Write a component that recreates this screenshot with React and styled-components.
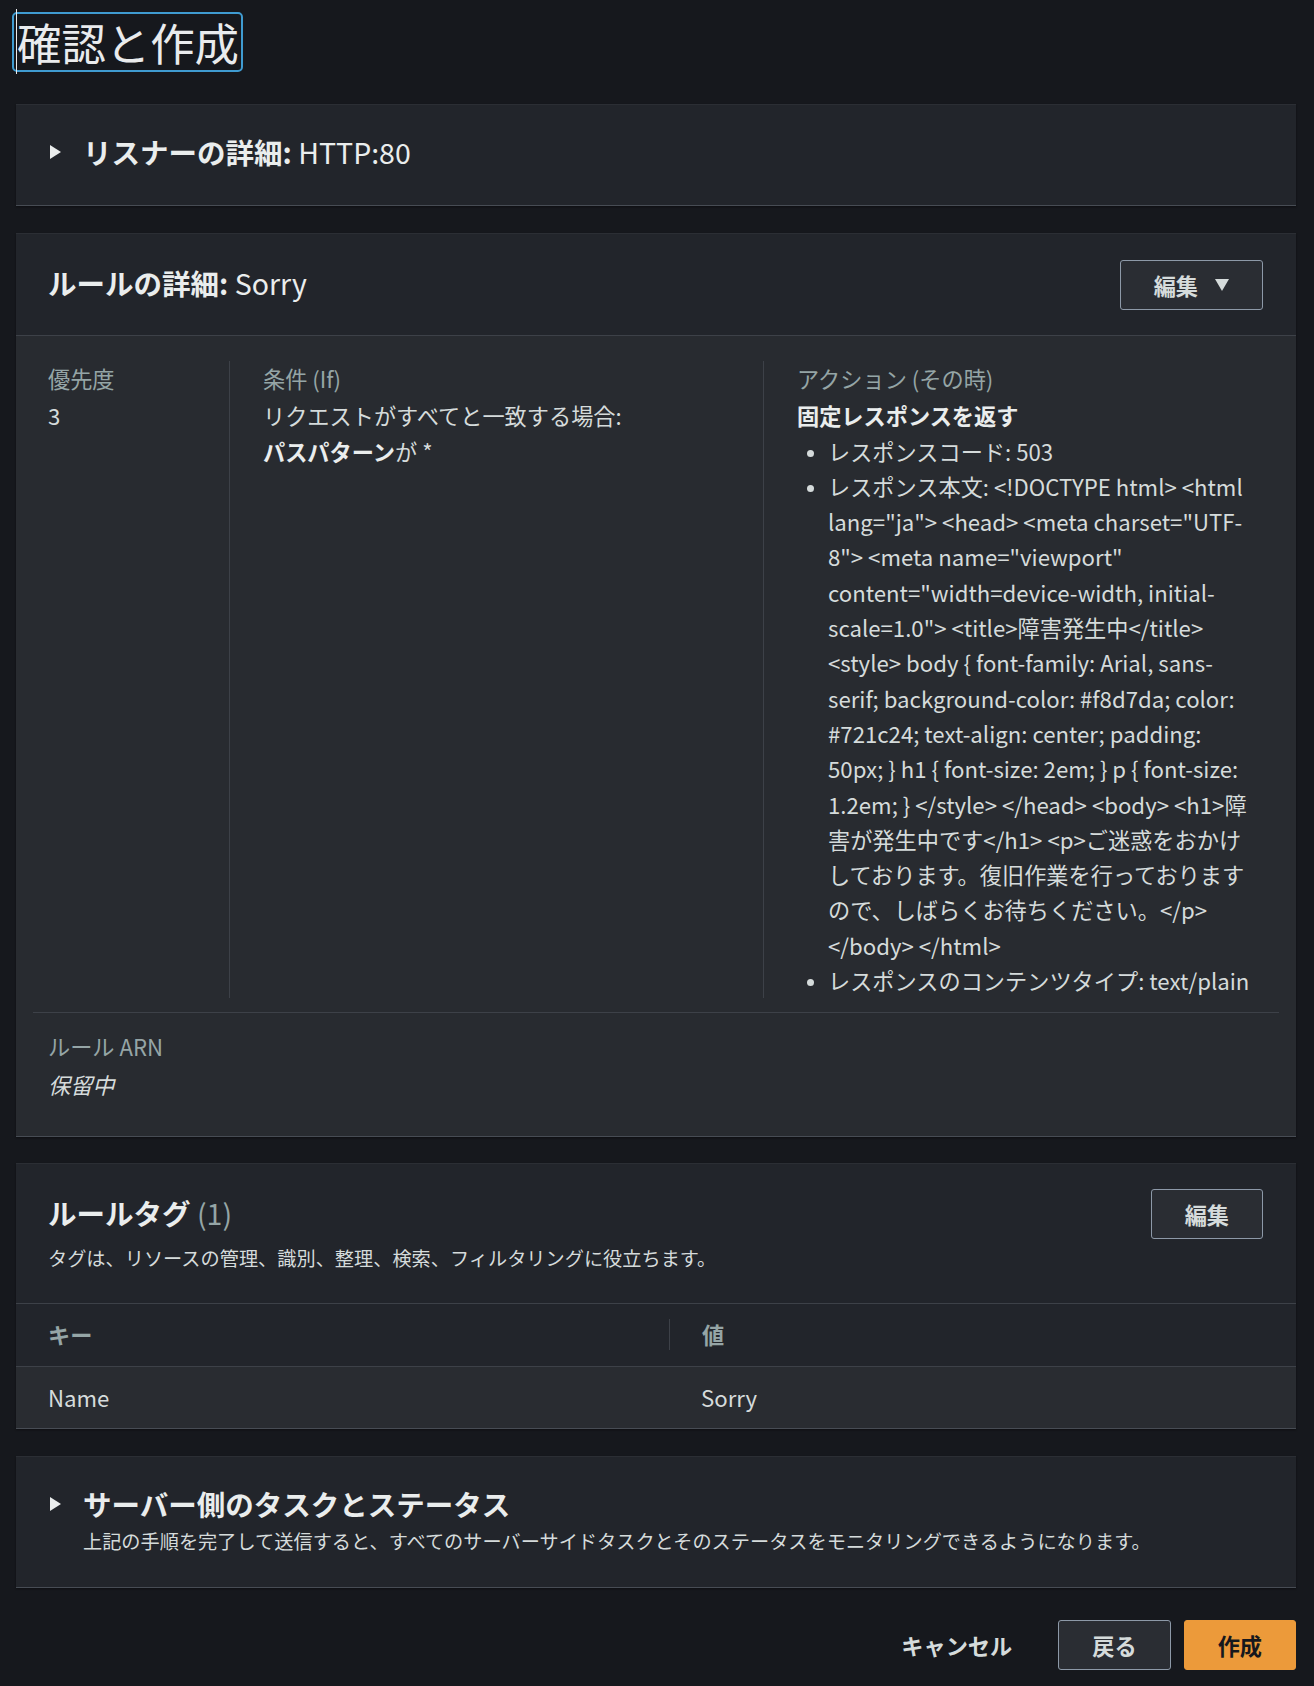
import React from "react";
import styled, { createGlobalStyle } from "styled-components";

const GlobalStyle = createGlobalStyle`
  body {
    margin: 0;
    background: #16181d;
    font-family: "Noto Sans CJK JP", "Noto Sans", sans-serif;
    color: #d5dbdb;
  }
`;

const RESPONSE_BODY =
  '<!DOCTYPE html> <html lang="ja"> <head> <meta charset="UTF-8"> <meta name="viewport" content="width=device-width, initial-scale=1.0"> <title>障害発生中</title> <style> body { font-family: Arial, sans-serif; background-color: #f8d7da; color: #721c24; text-align: center; padding: 50px; } h1 { font-size: 2em; } p { font-size: 1.2em; } </style> </head> <body> <h1>障害が発生中です</h1> <p>ご迷惑をおかけしております。復旧作業を行っておりますので、しばらくお待ちください。</p> </body> </html>';

const Page = styled.div`
  padding: 12px 18px 18px 16px;
`;

const Title = styled.h1`
  display: inline-block;
  margin: 0 0 32px -4px;
  padding: 0 2px 0 2px;
  height: 56px;
  border: 2px solid #3f9bd1;
  border-radius: 5px;
  font-size: 44.4px;
  line-height: 56px;
  font-weight: 400;
  color: #e9ebed;
  span {
    border-left: 1px solid #e9ebed;
  }
`;

const Panel = styled.section`
  background: #22252b;
  border-top: 1px solid #2b2e34;
  border-bottom: 1px solid #474c54;
  box-shadow: 0 1px 2px rgba(0, 0, 0, 0.4);
  margin-bottom: ${(p) => p.$gap || 27}px;
`;

const Collapsed = styled.div`
  display: flex;
  align-items: flex-start;
  padding: ${(p) => p.$pad || "29px 32px 35px 34px"};
`;

const Caret = styled.svg`
  width: 11px;
  height: 14px;
  margin: 11px 22px 0 0;
  flex: none;
`;

const Heading = styled.h2`
  margin: 0 0 ${(p) => p.$lift || 0}px;
  font-size: 28.5px;
  line-height: ${(p) => p.$lh || 36}px;
  font-weight: 700;
  color: #eaeded;
  small {
    font-size: inherit;
    font-weight: 400;
  }
  em {
    font-style: normal;
    font-weight: 400;
    color: #95a5a6;
  }
`;

const Desc = styled.p`
  margin: ${(p) => p.$mt || 5}px 0 0;
  font-size: 19.2px;
  line-height: 28px;
  color: #d5dbdb;
`;

const Header = styled.div`
  display: flex;
  justify-content: space-between;
  align-items: ${(p) => p.$align || "center"};
  padding: ${(p) => p.$pad || "26px 33px 25px 32px"};
  border-bottom: 1px solid #3d4148;
`;

const Button = styled.button`
  display: inline-flex;
  align-items: center;
  justify-content: center;
  gap: 17px;
  height: 50px;
  padding: 0 ${(p) => p.$px || 33}px;
  border: 1px solid ${(p) => (p.$primary ? "#ec9a3a" : p.$plain ? "transparent" : "#8d99a8")};
  border-radius: 3px;
  background: ${(p) => (p.$primary ? "#ec9a3a" : p.$plain ? "transparent" : "#2a2d33")};
  color: ${(p) => (p.$primary ? "#16181d" : "#d5dbdb")};
  font-family: inherit;
  font-size: 22.2px;
  font-weight: 700;
  line-height: 1;
`;

const Body = styled.div`
  background: #282b30;
  padding: 25px 17px 34px;
`;

const Columns = styled.div`
  display: grid;
  grid-template-columns: 196px 534px 1fr;
  padding-bottom: 14px;
  border-bottom: 1px solid #3d4148;
`;

const Column = styled.div`
  padding: 0 20px 0 ${(p) => (p.$first ? 15 : 33)}px;
  border-left: ${(p) => (p.$first ? "none" : "1px solid #3d4148")};
  font-size: 22.2px;
  line-height: 35.3px;
  strong {
    font-weight: 700;
    color: #eaeded;
  }
`;

const Label = styled.div`
  color: #95a5a6;
  margin-bottom: 2px;
`;

const Value = styled.div`
  color: #d5dbdb;
  font-style: ${(p) => (p.$italic ? "italic" : "normal")};
`;

const List = styled.ul`
  margin: 0;
  padding-left: 31px;
  li::marker {
    font-size: 18px;
  }
`;

const Arn = styled.div`
  padding: 16px 15px 0;
  font-size: 22.2px;
  line-height: 35.3px;
`;

const Table = styled.div`
  font-size: 22.2px;
  line-height: 35px;
`;

const Row = styled.div`
  display: grid;
  grid-template-columns: 653px 1fr;
  align-items: center;
  height: ${(p) => (p.$head ? 62 : 61)}px;
  background: ${(p) => (p.$head ? "#22252b" : "#292c31")};
  border-bottom: ${(p) => (p.$head ? "1px solid #3d4148" : "none")};
`;

const Cell = styled.div`
  padding-left: 32px;
  color: ${(p) => (p.$head ? "#95a5a6" : "#d5dbdb")};
  font-weight: ${(p) => (p.$head ? 700 : 400)};
  border-left: ${(p) => (p.$divider ? "1px solid #3d4148" : "none")};
  line-height: 31px;
`;

const Footer = styled.div`
  display: flex;
  justify-content: flex-end;
  gap: 13px;
`;

const RightTriangle = () => (
  <Caret viewBox="0 0 11 14">
    <polygon points="0,0 11,7 0,14" fill="#eaeded" />
  </Caret>
);

const DownTriangle = () => (
  <svg width="14" height="12" viewBox="0 0 14 12">
    <polygon points="0,0 14,0 7,12" fill="#d5dbdb" />
  </svg>
);

export default function App() {
  return (
    <>
      <GlobalStyle />
      <Page>
        <Title>
          <span>確認と作成</span>
        </Title>

        <Panel>
          <Collapsed>
            <RightTriangle />
            <Heading>
              リスナーの詳細: <small>HTTP:80</small>
            </Heading>
          </Collapsed>
        </Panel>

        <Panel $gap={26}>
          <Header>
            <Heading $lift={5}>
              ルールの詳細: <small>Sorry</small>
            </Heading>
            <Button $px={33}>
              編集 <DownTriangle />
            </Button>
          </Header>
          <Body>
            <Columns>
              <Column $first>
                <Label>優先度</Label>
                <Value>3</Value>
              </Column>
              <Column>
                <Label>条件 (If)</Label>
                <Value>リクエストがすべてと一致する場合:</Value>
                <Value>
                  <strong>パスパターン</strong>が *
                </Value>
              </Column>
              <Column>
                <Label>アクション (その時)</Label>
                <Value>
                  <strong>固定レスポンスを返す</strong>
                </Value>
                <List>
                  <li>レスポンスコード: 503</li>
                  <li>{`レスポンス本文: ${RESPONSE_BODY}`}</li>
                  <li>レスポンスのコンテンツタイプ: text/plain</li>
                </List>
              </Column>
            </Columns>
            <Arn>
              <Label>ルール ARN</Label>
              <Value $italic>保留中</Value>
            </Arn>
          </Body>
        </Panel>

        <Panel>
          <Header $align="flex-start" $pad="25px 33px 31px 32px">
            <div>
              <Heading $lh={47}>
                ルールタグ <em>(1)</em>
              </Heading>
              <Desc $mt={8}>タグは、リソースの管理、識別、整理、検索、フィルタリングに役立ちます。</Desc>
            </div>
            <Button>編集</Button>
          </Header>
          <Table>
            <Row $head>
              <Cell $head>キー</Cell>
              <Cell $head $divider>値</Cell>
            </Row>
            <Row>
              <Cell>Name</Cell>
              <Cell>Sorry</Cell>
            </Row>
          </Table>
        </Panel>

        <Panel $gap={32}>
          <Collapsed $pad="29px 32px 32px 34px">
            <RightTriangle />
            <div>
              <Heading>サーバー側のタスクとステータス</Heading>
              <Desc>
                上記の手順を完了して送信すると、すべてのサーバーサイドタスクとそのステータスをモニタリングできるようになります。
              </Desc>
            </div>
          </Collapsed>
        </Panel>

        <Footer>
          <Button $plain $px={32}>キャンセル</Button>
          <Button>戻る</Button>
          <Button $primary>作成</Button>
        </Footer>
      </Page>
    </>
  );
}
